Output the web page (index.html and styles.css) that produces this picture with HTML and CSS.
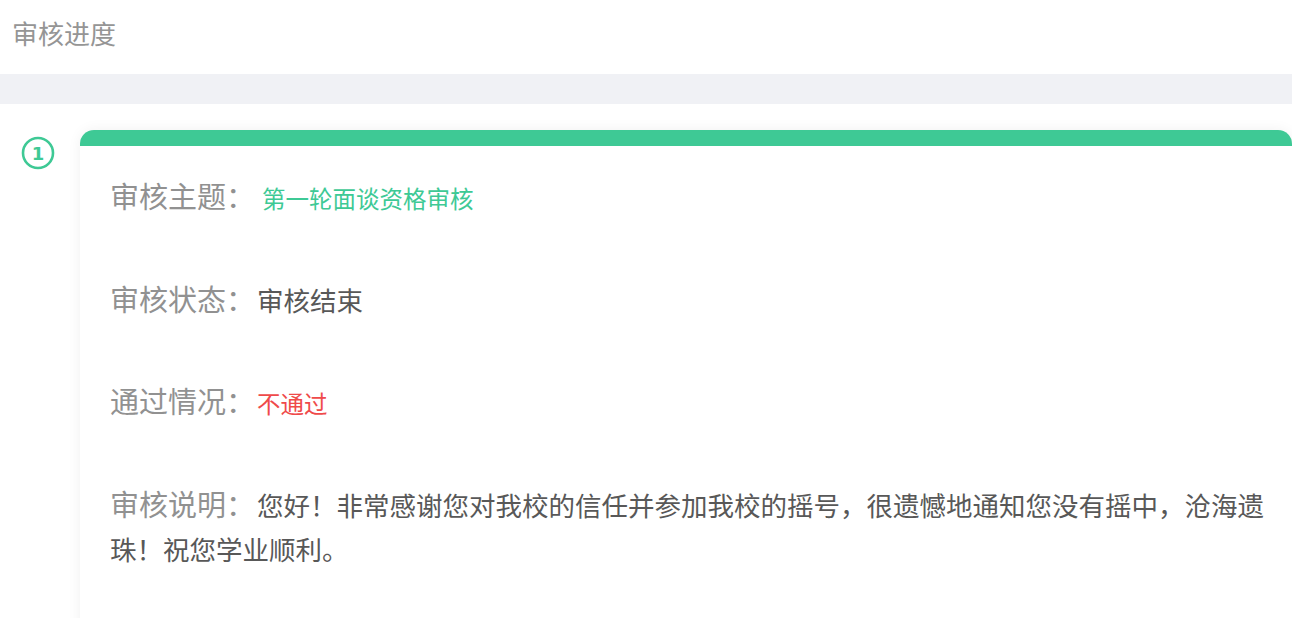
FILE: index.html
```html
<!DOCTYPE html>
<html lang="zh-CN">
<head>
<meta charset="utf-8">
<title>审核进度</title>
<link rel="stylesheet" href="styles.css">
</head>
<body>
  <header class="page-header">审核进度</header>
  <div class="band"></div>
  <main class="content">
    <div class="step-col">
      <svg class="step-num" width="34" height="34" viewBox="0 0 34 34">
        <circle cx="17" cy="17" r="15" fill="none" stroke="#3ec995" stroke-width="2.6"/>
        <text x="17" y="23.5" text-anchor="middle" font-family="'DejaVu Sans', sans-serif" font-size="18" font-weight="700" fill="#3ec995">1</text>
      </svg>
    </div>
    <section class="card">
      <div class="card-bar"></div>
      <div class="card-body">
        <div class="row"><span class="label">审核主题：</span><span class="val-green">第一轮面谈资格审核</span></div>
        <div class="row"><span class="label">审核状态：</span><span class="val">审核结束</span></div>
        <div class="row"><span class="label">通过情况：</span><span class="val-red">不通过</span></div>
        <div class="row"><span class="label">审核说明：</span><span class="val">您好！非常感谢您对我校的信任并参加我校的摇号，很遗憾地通知您没有摇中，沧海遗珠！祝您学业顺利。</span></div>
      </div>
    </section>
  </main>
</body>
</html>
```

FILE: styles.css
```css
html, body {
  margin: 0;
  padding: 0;
  background: #ffffff;
  font-family: "Noto Sans CJK SC", "Noto Sans", sans-serif;
  overflow: hidden;
}

.page-header {
  height: 74px;
  line-height: 66px;
  padding-left: 12px;
  font-size: 26px;
  color: #959595;
}

.band {
  height: 30px;
  background: #f0f1f5;
}

.content {
  display: flex;
  padding-top: 26px;
}

.step-col {
  width: 80px;
  flex: none;
}

.step-num {
  display: block;
  margin-left: 21px;
  margin-top: 6px;
}

.card {
  flex: 1;
  min-height: 600px;
  border-radius: 14px 14px 0 0;
  box-shadow: 0 0 14px rgba(0, 0, 0, 0.06);
  background: #fff;
}

.card-bar {
  height: 16px;
  background: #3ec995;
  border-radius: 14px 14px 0 0;
}

.card-body {
  padding: 27px 16px 0 30px;
  display: flex;
  flex-direction: column;
  gap: 56px;
}

.row {
  line-height: 44px;
  font-size: 26.5px;
  color: #919191;
}

.label {
  font-size: 29px;
  margin-right: 2px;
}

.val {
  color: #585858;
}

.val-green {
  color: #3ec995;
  font-size: 23.5px;
  margin-left: 5px;
}

.val-red {
  color: #ef4a4a;
  font-size: 23.5px;
}
```
